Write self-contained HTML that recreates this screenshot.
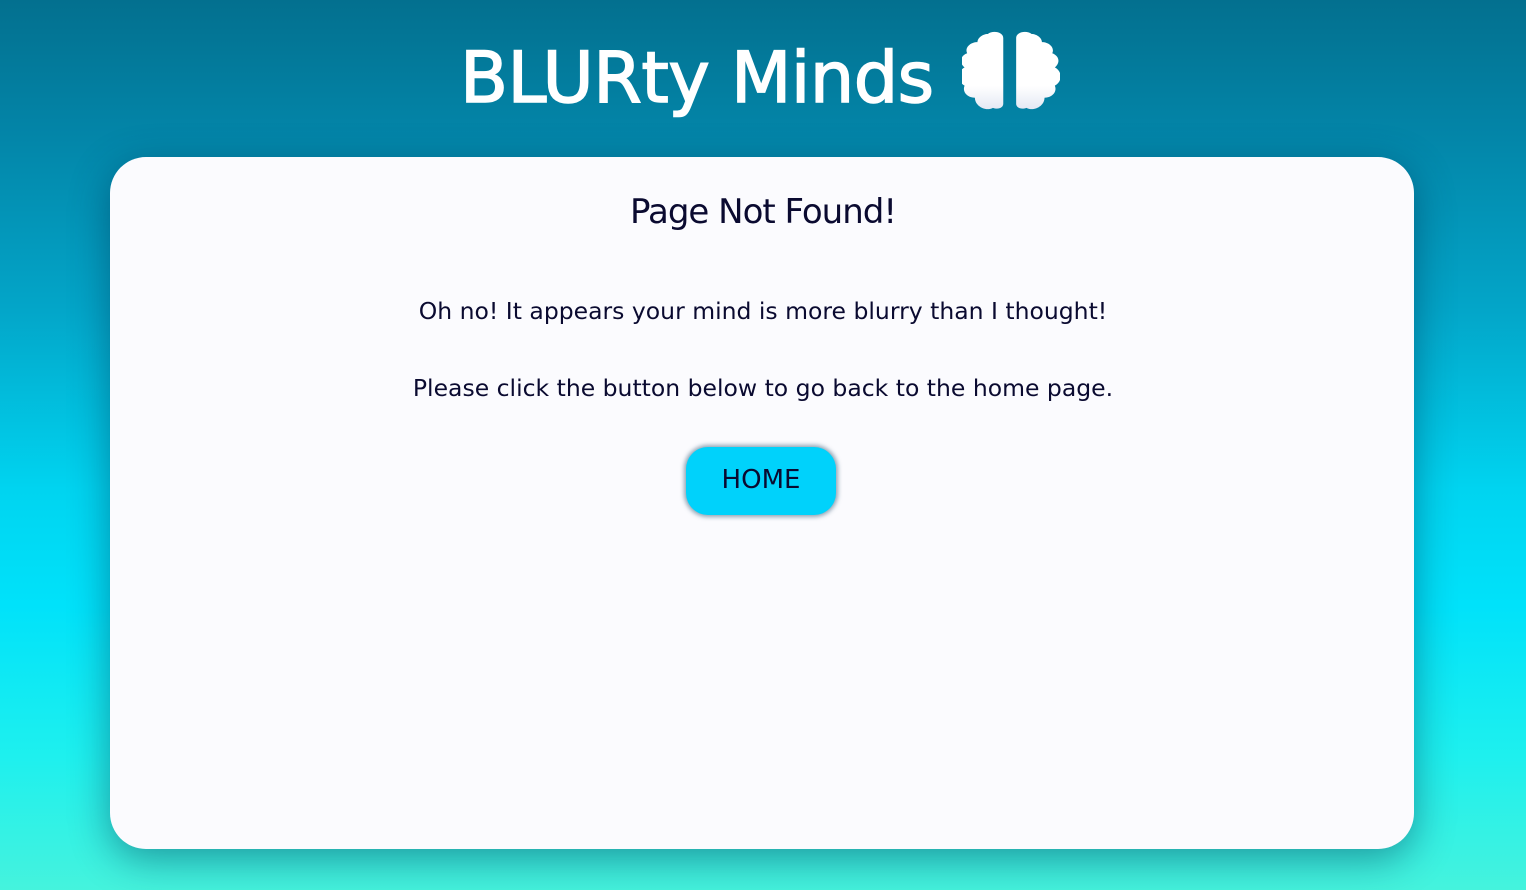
<!DOCTYPE html>
<html><head><meta charset="utf-8"><style>
html,body{margin:0;padding:0;width:1526px;height:890px;overflow:hidden}
body{background:linear-gradient(to bottom,#03708f 0%,#0385a8 15%,#03a6c9 35%,#00d4f0 55%,#00e2fa 68%,#1ef0ee 85%,#45f3dd 100%);font-family:"DejaVu Sans","Liberation Sans",sans-serif;position:relative;text-align:center}
.title{position:absolute;left:460px;top:28px;width:480px;text-align:left;font-family:"DejaVu Sans",sans-serif;font-size:70px;color:#fff;letter-spacing:-0.5px;line-height:100px;white-space:nowrap;-webkit-text-stroke:1.5px #fff}
.card{position:absolute;left:110px;top:157px;width:1304px;height:692px;background:#fbfbfe;border-radius:36px;box-shadow:0 10px 40px rgba(0,40,70,.45)}
h1{margin:0;position:absolute;top:192px;left:0;right:0;font-family:"DejaVu Sans",sans-serif;font-size:34px;font-weight:normal;color:#0a0a30;letter-spacing:-1px}
p{position:absolute;left:0;right:0;margin:0;font-size:23.5px;color:#0a0a30}
.btn{position:absolute;left:686px;top:447px;width:150px;height:68px;border-radius:22px;background:#00d2fb;box-shadow:0 0 4px 2px rgba(40,80,110,.5);font-size:26px;line-height:66px;text-align:center;color:#0a0a30}
</style></head><body>
<div class="title">BLURty Minds</div>
<svg style="position:absolute;left:962px;top:31px" width="98" height="90" viewBox="14 1 76 89" preserveAspectRatio="none">
<defs><linearGradient id="g" x1="0" y1="0" x2="0" y2="1"><stop offset="0.7" stop-color="#fff"/><stop offset="1" stop-color="#e4e9f4"/></linearGradient></defs>
<path fill="url(#g)" d="M46 8c0-6-8-8-12-4c-4 0-8 4-8 8c-6 0-10 6-8 11c-6 3-6 10-2 14c-6 4-6 14 0 18c-2 6 2 12 8 12c0 8 8 14 14 10c4 2 8 0 8-4z"/>
<path fill="url(#g)" d="M56 8c0-6 8-8 12-4c4 0 8 4 8 8c6 0 10 6 8 11c6 3 6 10 2 14c6 4 6 14 0 18c2 6-2 12-8 12c0 8-8 14-14 10c-4 2-8 0-8-4z"/>
</svg>
<div class="card"></div>
<h1>Page Not Found!</h1>
<p style="top:297px">Oh no! It appears your mind is more blurry than I thought!</p>
<p style="top:374px">Please click the button below to go back to the home page.</p>
<div class="btn">HOME</div>
</body></html>
